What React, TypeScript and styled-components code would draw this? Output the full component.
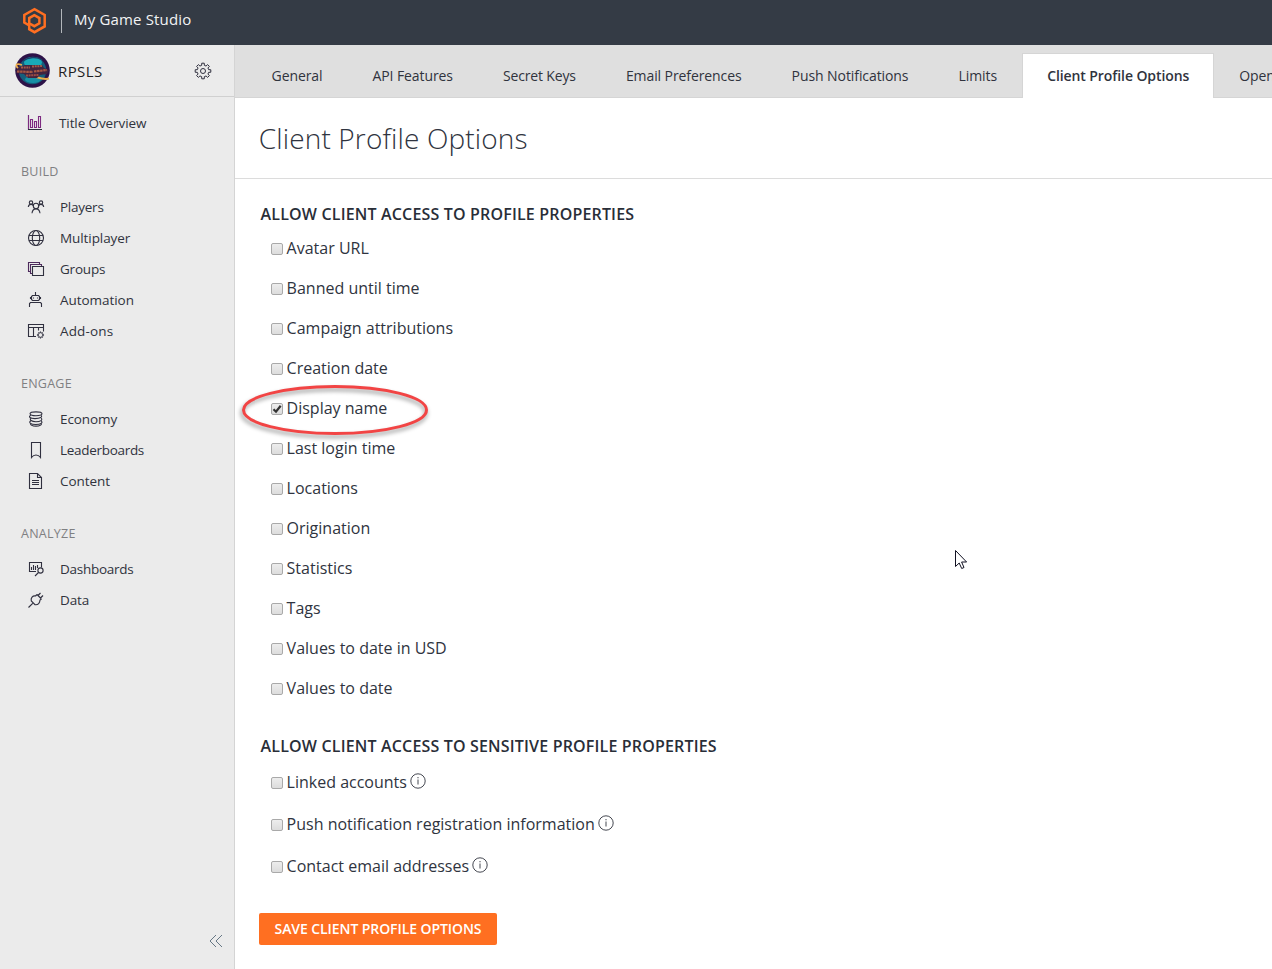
import React from 'react';
import styled, { createGlobalStyle } from 'styled-components';

const Global = createGlobalStyle`
  * { box-sizing: border-box; }
  body { margin: 0; overflow: hidden; background: #fff; color: #2f3440; font-family: "Open Sans", "Noto Sans", sans-serif; }
`;

const Page = styled.div`
  position: relative;
  display: flex;
  flex-direction: column;
  width: 1272px;
  height: 969px;
  overflow: hidden;
`;

const TopBar = styled.header`
  display: flex;
  align-items: center;
  flex: none;
  height: 45px;
  padding: 0 0 4px 22px;
  background: #343b45;
  color: #f2f3f4;
`;

const Divider = styled.span`
  width: 1px;
  height: 24px;
  margin: 0 12px 0 14px;
  background: #b3b7bb;
`;

const Tracked = styled.span<{ $track?: number }>`
  letter-spacing: ${(p) => p.$track ?? 0}px;
  white-space: nowrap;
`;

const StudioName = styled(Tracked)`
  padding-bottom: 3px;
  font-size: 15px;
  line-height: 20px;
`;

const Body = styled.div`
  display: flex;
  flex: 1;
  min-height: 0;
`;

const Sidebar = styled.aside`
  display: flex;
  flex-direction: column;
  flex: none;
  width: 235px;
  background: #ebebeb;
  border-right: 1px solid #d4d4d4;
`;

const TitleRow = styled.div`
  display: flex;
  align-items: center;
  height: 52px;
  padding-left: 14px;
  border-bottom: 1px solid #d0d0d0;
`;

const TitleName = styled(Tracked)`
  flex: 1;
  margin-left: 8px;
  font-size: 15px;
  font-weight: 500;
  color: #1e1e22;
`;

const GearSlot = styled.span`
  display: flex;
  margin-right: 22.5px;
`;

const Nav = styled.nav`
  display: flex;
  flex-direction: column;
  flex: 1;
  padding-top: 11px;
`;

const NavItem = styled.a`
  display: flex;
  align-items: center;
  height: 31px;
  padding-left: 27px;
  color: #30333d;
`;

const NavIcon = styled.span`
  display: flex;
  margin-bottom: 1px;
`;

const NavLabel = styled(Tracked)<{ $indent?: number }>`
  margin-left: ${(p) => p.$indent ?? 15}px;
  padding-bottom: 2px;
  font-size: 13.5px;
`;

const GroupTitle = styled.div<{ $gap: number }>`
  height: 30px;
  margin: ${(p) => p.$gap}px 0 5px 21px;
  font-size: 12.5px;
  line-height: 30px;
  color: #7f8082;
`;

const Collapse = styled.div`
  display: flex;
  justify-content: flex-end;
  padding: 0 11px 21px 0;
`;

const Main = styled.main`
  display: flex;
  flex-direction: column;
  flex: 1;
  min-width: 0;
`;

const TabBar = styled.div`
  display: flex;
  flex: none;
  height: 53px;
  padding: 8px 0 0 11.6px;
  overflow: hidden;
  background: #dfdfdf;
  box-shadow: inset 0 -1px #d5d5d5;
`;

const Tab = styled.div<{ $active?: boolean }>`
  flex: none;
  height: 45px;
  padding: 0 24px;
  border: 1px solid ${(p) => (p.$active ? '#d5d5d5' : 'transparent')};
  border-bottom: 0;
  background: ${(p) => (p.$active ? '#fff' : 'transparent')};
  font-size: 14px;
  font-weight: ${(p) => (p.$active ? 600 : 400)};
  line-height: 43px;
  color: #30333d;
`;

const PageTitle = styled.h1`
  flex: none;
  height: 81px;
  margin: 0;
  padding-left: 23.7px;
  border-bottom: 1px solid #dcdcdc;
  font-size: 28px;
  font-weight: 300;
  line-height: 81px;
`;

const Form = styled.form`
  display: flex;
  flex-direction: column;
  align-items: flex-start;
  padding: 21px 0 0 24px;
`;

const SectionTitle = styled.h2<{ $top?: number; $bottom?: number }>`
  margin: ${(p) => p.$top ?? 0}px 0 ${(p) => p.$bottom ?? 0}px 1.6px;
  font-size: 16px;
  font-weight: 600;
  line-height: 28px;
  color: #292e38;
`;

const Option = styled.label<{ $height: number }>`
  display: flex;
  align-items: center;
  height: ${(p) => p.$height}px;
  padding-left: 12px;
  font-size: 16px;
`;

const Box = styled.span`
  display: flex;
  width: 12px;
  height: 12px;
  margin: 2px 3.6px 0 0;
  border: 1px solid #a9a9a9;
  border-radius: 2px;
  background: linear-gradient(#ededed, #dcdcdc);
`;

const InfoSlot = styled.span`
  display: flex;
  margin: 0 0 2px 3.2px;
`;

const SaveButton = styled.button`
  width: 238px;
  height: 32px;
  margin-top: 26px;
  padding: 0;
  border: 0;
  border-radius: 2px;
  background: #ff6f21;
  color: #fff;
  font: 600 14px/32px "Open Sans", sans-serif;
`;

const Highlight = styled.svg`
  position: absolute;
  left: 232px;
  top: 376px;
`;

const Cursor = styled.svg`
  position: absolute;
  left: 954px;
  top: 549px;
`;

const Icon = ({ children, size = 18 }: { children: React.ReactNode; size?: number }) => (
  <svg width={size} height={size} viewBox={`0 0 ${size} ${size}`} fill="none" stroke="#30303f" strokeWidth="1.1">
    {children}
  </svg>
);

const gearPath = (cx: number, cy: number, inner: number, outer: number, teeth: number) => {
  const step = (Math.PI * 2) / teeth;
  const points: string[] = [];
  for (let i = 0; i < teeth; i++) {
    [[-0.3, inner], [-0.2, outer], [0.2, outer], [0.3, inner]].forEach(([k, r]) => {
      const a = step * (i + k) - Math.PI / 2;
      points.push(`${(cx + r * Math.cos(a)).toFixed(2)} ${(cy + r * Math.sin(a)).toFixed(2)}`);
    });
  }
  return `M${points.join('L')}Z`;
};

const icons = {
  overview: (
    <Icon>
      <path d="M1.500 1v14.500H15" stroke="#30303f" />
      <path d="M1.500 1v14M3.500 5.500h2v8h-2zM7.500 7.500h2v6h-2zM11.500 2.500h2v11h-2z" stroke="#7d2a80" />
    </Icon>
  ),
  players: (
    <Icon>
      <circle cx="9" cy="8" r="2.700" />
      <path d="M5 15.200c.3-2.700 1.700-4.300 4-4.300s3.700 1.600 4 4.300" />
      <circle cx="4" cy="4.600" r="1.700" />
      <circle cx="14" cy="4.600" r="1.700" />
      <path d="M1.300 9c.2-1.700 1.200-2.600 2.700-2.600 1 0 1.800.4 2.300 1.200M16.700 9c-.2-1.700-1.200-2.600-2.700-2.600-1 0-1.800.4-2.300 1.200" />
    </Icon>
  ),
  globe: (
    <Icon>
      <circle cx="9" cy="9" r="7.500" />
      <ellipse cx="9" cy="9" rx="3.700" ry="7.500" />
      <path d="M2 6.500h14M2 11.500h14" />
    </Icon>
  ),
  groups: (
    <Icon>
      <path d="M3.500 11.500h-2v-9h11v2" stroke="#4d2a5c" />
      <path d="M5.500 13.500h-2v-9h11v2" stroke="#4d2a5c" />
      <path d="M5.500 6.500h11v9h-11z" />
    </Icon>
  ),
  robot: (
    <Icon>
      <path d="M8.500 1v3M5.500 4.500h6l1 1v3l-1 1h-6l-1-1v-3zM3.500 6v2M13.500 6v2M2.500 16v-3.500l1-1h10l1 1V16" />
      <path d="M6.500 6.500v1M10.500 6.500v1" />
    </Icon>
  ),
  addons: (
    <Icon>
      <path d="M9 14.500H1.500v-12h15v7M1.500 5.500h15M6.500 5.500v9M11.500 5.500v3" />
      <path d={gearPath(13.5, 13, 2, 3.1, 8)} strokeWidth=".9" />
    </Icon>
  ),
  coins: (
    <Icon>
      <ellipse cx="9" cy="3.800" rx="6" ry="1.900" />
      <path d="M3.800 5.200c-2.800 1.500-1 3.400 4.200 3.400s8-1.600 6-3.300M4 8c-2 1.700.5 3.700 5 3.700s7-1.700 5.200-3.600M3.800 10.800c-2.600 1.900 0 3.700 5 3.700s7.600-1.800 5.400-3.700" />
      <path d="M3.500 13.500c0 2 2 2.600 5.500 2.600s5.500-.8 5.500-2.600" />
    </Icon>
  ),
  bookmark: (
    <Icon>
      <path d="M4.500 1.500h9v15c-1.500-2-3-2.500-4.500-2.500s-3 .5-4.500 2.500z" />
    </Icon>
  ),
  document: (
    <Icon>
      <path d="M2.500 1.500h8l4 4v11h-12zM10.500 1.500v4h4M5 8.500h7M5 10.500h7M5 12.500h7" />
    </Icon>
  ),
  dashboards: (
    <Icon>
      <path d="M9 11.500H2.500v-9h12v5M4.500 7v3M6.500 5v5M8.500 6v4M10.500 5v3" />
      <circle cx="13.500" cy="10.500" r="2.600" />
      <path d="M11.500 12.500L8 16" />
    </Icon>
  ),
  plug: (
    <Icon>
      <path d="M1.500 16.500l4.200-4.200M10 3.500l4.500 4.500M8.500 5c-2.800-.5-5 2-4.200 5l3.700 3.700c3 .5 5.200-1.800 4.800-4.500M11 4.500L13.500 2M13.500 7L16 4.500M8.500 5L10 3.500M12.800 9.200L14.500 8" strokeWidth="1.150" />
    </Icon>
  ),
};

type Item = [keyof typeof icons, string, number];

const groups: { title: string; gap: number; items: Item[] }[] = [
  {
    title: 'BUILD', gap: 18,
    items: [['players', 'Players', -0.25], ['globe', 'Multiplayer', -0.08], ['groups', 'Groups', -0.2], ['robot', 'Automation', -0.05], ['addons', 'Add-ons', 0.15]],
  },
  {
    title: 'ENGAGE', gap: 22,
    items: [['coins', 'Economy', -0.1], ['bookmark', 'Leaderboards', -0.3], ['document', 'Content', -0.05]],
  },
  {
    title: 'ANALYZE', gap: 22,
    items: [['dashboards', 'Dashboards', -0.27], ['plug', 'Data', -0.1]],
  },
];

const tabs: [string, number][] = [
  ['General', -0.09], ['API Features', -0.09], ['Secret Keys', -0.15], ['Email Preferences', -0.09],
  ['Push Notifications', -0.08], ['Limits', -0.05], ['Client Profile Options', -0.09], ['OpenID Connect', -0.09],
];

const properties: string[] = [
  'Avatar URL', 'Banned until time', 'Campaign attributions', 'Creation date', 'Display name', 'Last login time',
  'Locations', 'Origination', 'Statistics', 'Tags', 'Values to date in USD', 'Values to date',
];

const sensitive: string[] = ['Linked accounts', 'Push notification registration information', 'Contact email addresses'];

const Check = ({ on }: { on?: boolean }) => (
  <Box>
    {on && (
      <svg width="10" height="10" viewBox="0 0 10 10" fill="none" stroke="#333" strokeWidth="2.200">
        <path d="M1.500 5.200l2.500 2.500L8.700 1.700" />
      </svg>
    )}
  </Box>
);

const Logo = () => (
  <svg width="25" height="27" viewBox="0 0 25 27" fill="none" stroke="#ff6f21" strokeWidth="2.500">
    <path d="M7.200 18.300L2.300 15.600V7.900L12.500 2.200l10.200 5.700v11.500L12.500 25.200 7.200 22.200V16.500" />
    <path d="M12.300 8.200l5.100 2.900v5.200l-5.100 2.900-5.100-2.900v-5.200z" />
  </svg>
);

const Planet = () => (
  <svg width="36" height="36" viewBox="0 0 36 36">
    <circle cx="18.500" cy="17.500" r="17.300" fill="#2d1248" />
    <circle cx="18.500" cy="17.500" r="13.800" fill="#155e7c" />
    <ellipse cx="19" cy="9.500" rx="9" ry="5.500" fill="#18a9b8" />
    <ellipse cx="19" cy="26.500" rx="8" ry="3.500" fill="#1890a6" />
    <path d="M9 8c5-4 14-5 19-1" fill="none" stroke="#1b3f68" strokeWidth="1.500" />
    <path d="M6 17C0 12 2 10 8 12" fill="none" stroke="#edae4b" strokeWidth="1.800" />
    <path d="M22 24c5 1.500 10 2.500 13 1.500" fill="none" stroke="#edae4b" strokeWidth="2" />
    <path d="M5 14l6-2h17l2 3 5 2-2 4-7 1-3 3H14l-4-4-8-1 1-4z" fill="#42243f" />
    <path d="M7 14.500l9 0M18 13.500l10-.5" stroke="#a35a48" strokeWidth="2" strokeDasharray="2 .7" />
    <path d="M3 18.500l16 .5M20 18.500l13-1.500" stroke="#a95844" strokeWidth="2.200" strokeDasharray="2.500 .6" />
    <path d="M12 22.500l13-.5" stroke="#9b4d45" strokeWidth="2" strokeDasharray="2 .6" />
  </svg>
);

const Info = () => (
  <svg width="16" height="16" viewBox="0 0 16 16" fill="none" stroke="#30333d">
    <circle cx="8" cy="8" r="7.200" strokeWidth=".9" />
    <path d="M8 6.500v5M8 4v1.300" strokeWidth=".9" />
  </svg>
);

export default function App() {
  return (
    <Page>
      <Global />
      <TopBar>
        <Logo />
        <Divider />
        <StudioName $track={0.17}>My Game Studio</StudioName>
      </TopBar>
      <Body>
        <Sidebar>
          <TitleRow>
            <Planet />
            <TitleName $track={0.4}>RPSLS</TitleName>
            <GearSlot>
              <Icon>
                <path d={gearPath(9, 9, 5.8, 7.9, 8)} strokeWidth="1" />
                <circle cx="9" cy="9" r="2.500" strokeWidth="1" />
              </Icon>
            </GearSlot>
          </TitleRow>
          <Nav>
            <NavItem>
              <NavIcon>{icons.overview}</NavIcon>
              <NavLabel $indent={14} $track={-0.1}>Title Overview</NavLabel>
            </NavItem>
            {groups.map((g) => (
              <React.Fragment key={g.title}>
                <GroupTitle $gap={g.gap}>
                  <Tracked $track={0.25}>{g.title}</Tracked>
                </GroupTitle>
                {g.items.map(([icon, label, track]) => (
                  <NavItem key={label}>
                    <NavIcon>{icons[icon]}</NavIcon>
                    <NavLabel $track={track}>{label}</NavLabel>
                  </NavItem>
                ))}
              </React.Fragment>
            ))}
          </Nav>
          <Collapse>
            <svg width="14" height="14" viewBox="0 0 14 14" fill="none" stroke="#667785" strokeWidth="1">
              <path d="M7 1L1 7l6 6M13 1L7 7l6 6" />
            </svg>
          </Collapse>
        </Sidebar>
        <Main>
          <TabBar>
            {tabs.map(([name, track]) => (
              <Tab key={name} $active={name === 'Client Profile Options'}>
                <Tracked $track={track}>{name}</Tracked>
              </Tab>
            ))}
          </TabBar>
          <PageTitle>
            <Tracked $track={0.15}>Client Profile Options</Tracked>
          </PageTitle>
          <Form>
            <SectionTitle>
              <Tracked $track={0.17}>ALLOW CLIENT ACCESS TO PROFILE PROPERTIES</Tracked>
            </SectionTitle>
            {properties.map((p) => (
              <Option key={p} $height={40}>
                <Check on={p === 'Display name'} />
                <Tracked>{p}</Tracked>
              </Option>
            ))}
            <SectionTitle $top={24} $bottom={1}>
              <Tracked $track={0.17}>ALLOW CLIENT ACCESS TO SENSITIVE PROFILE PROPERTIES</Tracked>
            </SectionTitle>
            {sensitive.map((p) => (
              <Option key={p} $height={42}>
                <Check />
                <Tracked>{p}</Tracked>
                <InfoSlot>
                  <Info />
                </InfoSlot>
              </Option>
            ))}
            <SaveButton type="button">
              <Tracked $track={-0.08}>SAVE CLIENT PROFILE OPTIONS</Tracked>
            </SaveButton>
          </Form>
        </Main>
      </Body>
      <Highlight width="208" height="76" viewBox="0 0 208 76" fill="none">
        <defs>
          <filter id="soft" x="-10%" y="-20%" width="120%" height="150%">
            <feGaussianBlur stdDeviation="2" />
          </filter>
        </defs>
        <ellipse cx="102" cy="37" rx="92" ry="23.500" stroke="#000" strokeOpacity=".4" strokeWidth="3" filter="url(#soft)" />
        <ellipse cx="103" cy="34" rx="91.500" ry="23.500" stroke="#f24444" strokeWidth="3" />
      </Highlight>
      <Cursor width="15" height="22" viewBox="0 0 15 22">
        <path d="M1.500 1.500v16l3.700-3.500 2.500 5.500 2.300-1-2.400-5.500h5z" fill="#fff" stroke="#111122" strokeWidth="1" />
      </Cursor>
    </Page>
  );
}
